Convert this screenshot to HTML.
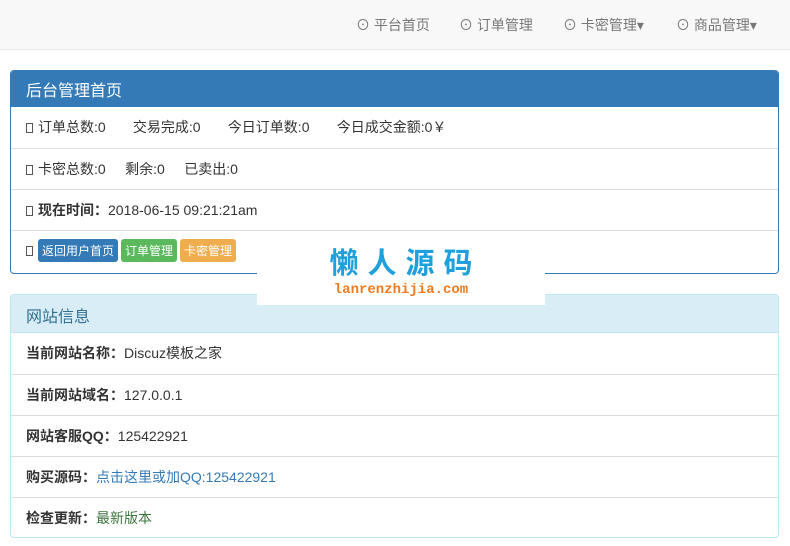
<!DOCTYPE html>
<html><head><meta charset="utf-8"><style>
*{box-sizing:border-box;margin:0;padding:0}
body{width:790px;height:546px;background:#fff;font-family:"Liberation Sans","Noto Sans CJK SC",sans-serif;font-size:14px;color:#333;position:relative;overflow:hidden}
.nav{height:50px;background:#f8f8f8;border-bottom:1px solid #e7e7e7;position:relative}
.nav span{position:absolute;top:15px;color:#777;font-size:14px}
.panel{position:absolute;left:10px;width:769px;border:1px solid #337ab7;border-radius:4px;overflow:hidden}
.ph{height:36px;background:#337ab7;color:#fff;font-size:16px;padding:6px 15px}
.row{height:41px;border-top:1px solid #ddd;padding:10px 15px;font-size:14px;white-space:nowrap}
.sq{display:inline-block;width:7px;height:10px;border:1px solid #555;margin-right:5px;vertical-align:-1px}
.b{display:inline-block;color:#fff;font-size:12px;padding:3px 4px;border-radius:3px;margin-right:3px}
.p2{border-color:#bce8f1}
.p2 .ph{background:#d9edf7;color:#31708f;height:38px;border-bottom:1px solid #bce8f1;padding-top:8px}
</style></head><body>
<div class="nav">
<span style="left:356px">⊙ 平台首页</span>
<span style="left:459px">⊙ 订单管理</span>
<span style="left:563px">⊙ 卡密管理▾</span>
<span style="left:676px">⊙ 商品管理▾</span>
</div>
<div class="panel" style="top:70px;height:204px">
<div class="ph">后台管理首页</div>
<div class="row" style="border-top:none"><span class="sq"></span>订单总数:0 &nbsp;&nbsp;&nbsp;&nbsp;&nbsp; 交易完成:0 &nbsp;&nbsp;&nbsp;&nbsp;&nbsp; 今日订单数:0 &nbsp;&nbsp;&nbsp;&nbsp;&nbsp; 今日成交金额:0￥</div>
<div class="row"><span class="sq"></span>卡密总数:0 &nbsp;&nbsp;&nbsp; 剩余:0 &nbsp;&nbsp;&nbsp; 已卖出:0</div>
<div class="row"><span class="sq"></span><b>现在时间：</b>2018-06-15 09:21:21am</div>
<div class="row" style="padding-top:8px"><span class="sq"></span><span class="b" style="background:#337ab7">返回用户首页</span><span class="b" style="background:#5cb85c">订单管理</span><span class="b" style="background:#f0ad4e">卡密管理</span></div>
</div>
<div class="panel p2" style="top:294px;height:244px">
<div class="ph">网站信息</div>
<div class="row" style="border-top:none"><b>当前网站名称：</b>Discuz模板之家</div>
<div class="row"><b>当前网站域名：</b>127.0.0.1</div>
<div class="row"><b>网站客服QQ：</b>125422921</div>
<div class="row"><b>购买源码：</b><span style="color:#337ab7">点击这里或加QQ:125422921</span></div>
<div class="row"><b>检查更新：</b><span style="color:#3c763d">最新版本</span></div>
</div>
<div style="position:absolute;left:257px;top:246px;width:288px;height:59px;background:#fff;text-align:center">
<div style="color:#1ea0dc;font-size:29px;font-weight:bold;letter-spacing:9px;padding-left:9px;line-height:36px">懒人源码</div>
<div style="color:#f07b1e;font-family:'Liberation Mono',monospace;font-weight:bold;font-size:14px;line-height:16px">lanrenzhijia.com</div>
</div>
</body></html>
